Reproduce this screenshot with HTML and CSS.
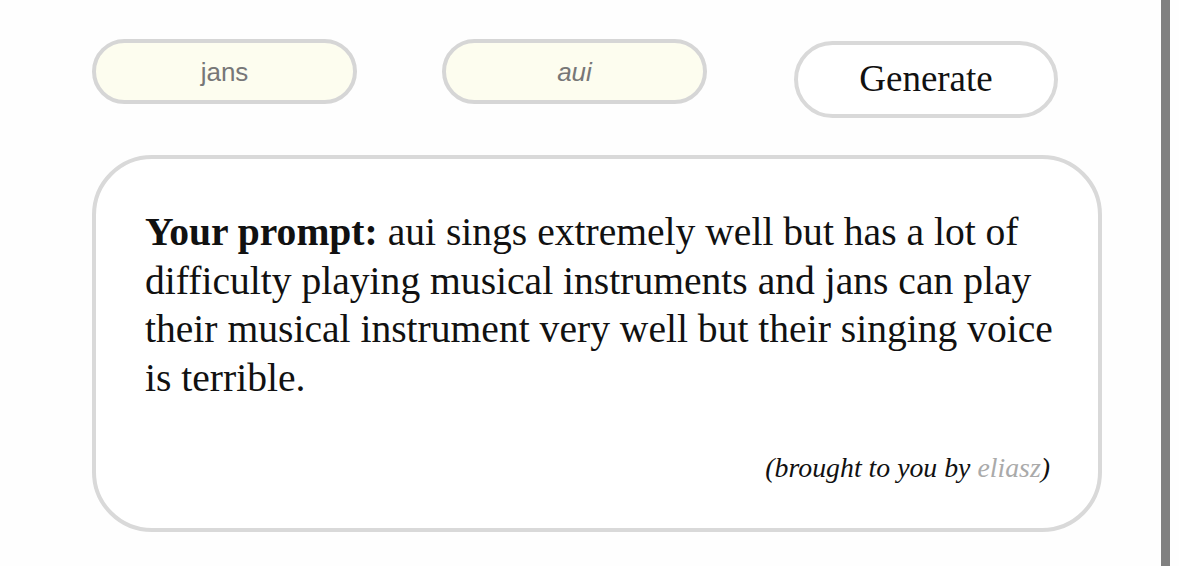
FILE: index.html
```html
<!DOCTYPE html>
<html>
<head>
<meta charset="utf-8">
<link rel="stylesheet" href="styles.css">
</head>
<body>
<div class="page">
  <main class="main">
    <div class="controls">
      <input class="field" type="text" value="jans">
      <input class="field" type="text" placeholder="aui">
      <button class="generate">Generate</button>
    </div>
    <section class="card">
      <p class="prompt"><strong>Your prompt:</strong> aui sings extremely well but has a lot of difficulty playing musical instruments and jans can play their musical instrument very well but their singing voice is terrible.</p>
      <p class="credit">(brought to you by <span class="author">eliasz</span>)</p>
    </section>
  </main>
  <div class="rail"></div>
</div>
</body>
</html>
```
FILE: styles.css
```css
html, body {
  margin: 0;
  padding: 0;
  background: #fefefe;
}
body {
  font-family: "Liberation Serif", "Times New Roman", serif;
  color: #111;
}
.page {
  display: flex;
  height: 566px;
}
.main {
  width: 1161px;
  padding: 39px 0 0 92px;
  box-sizing: border-box;
}
.rail {
  width: 9px;
  background: #808080;
  height: 566px;
}
.controls {
  display: flex;
  align-items: flex-start;
  gap: 85px;
  width: 966px;
}
.field {
  width: 265px;
  height: 65px;
  box-sizing: border-box;
  border: 4px solid #d6d6d6;
  border-radius: 33px;
  background: #fdfdef;
  font-family: "Liberation Sans", Arial, sans-serif;
  font-size: 26px;
  color: #777;
  text-align: center;
  padding: 2px 0 0;
  outline: none;
}
.field::placeholder {
  color: #777;
  font-style: italic;
}
.generate {
  margin-top: 2px;
  margin-left: 2px;
  width: 264px;
  height: 77px;
  box-sizing: border-box;
  border: 4px solid #d9d9d9;
  border-radius: 39px;
  background: #fff;
  font-family: "Liberation Serif", "Times New Roman", serif;
  font-size: 37px;
  color: #111;
  padding: 0 0 2px;
}
.card {
  margin-top: 37px;
  width: 1010px;
  height: 377px;
  box-sizing: border-box;
  border: 4px solid #d9d9d9;
  border-radius: 60px;
  background: #fff;
  padding: 49px 36px 0 49px;
}
.prompt {
  margin: 0;
  font-size: 39.6px;
  line-height: 48.5px;
}
.credit {
  margin: 50px 12px 0 0;
  text-align: right;
  font-style: italic;
  font-size: 27.8px;
}
.author {
  color: #aaa;
}
```
